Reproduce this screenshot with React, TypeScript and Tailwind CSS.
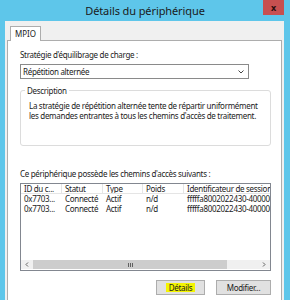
import React from 'react';

const cols = [
    { label: 'ID du c...', w: 'w-[41px]' },
    { label: 'Statut', w: 'w-[41px]' },
    { label: 'Type', w: 'w-[40px]' },
    { label: 'Poids', w: 'w-[41px]' },
    { label: 'Identificateur de session', w: 'w-[100px]' },
];

const rows = [
    ['0x7703...', 'Connecté', 'Actif', 'n/d', 'fffffa8002022430-4000000'],
    ['0x7703...', 'Connecté', 'Actif', 'n/d', 'fffffa8002022430-4000000'],
];

export default function App() {
    return (
        <div className="w-[290px] h-[300px] overflow-hidden bg-[#5ec6ea] text-[#1b1b1b] font-['Noto_Sans',sans-serif]">
            {/* Title bar */}
            <div className="relative h-[21px] flex items-center justify-center">
                <span className="text-[11px] leading-none text-[#1a1a1a] tracking-[-0.1px]">Détails du périphérique</span>
                <div className="absolute right-[6px] top-0 w-[21px] h-[15px] bg-[#c75050] flex items-center justify-center">
                    <span className="text-[9px] font-bold leading-none text-[#2a0e0e]">x</span>
                </div>
            </div>

            {/* Window body */}
            <div className="ml-[5px] mr-[6px] h-[279px] bg-[#f0f0f0] px-[2px] pt-[5px]">
                {/* Tabs */}
                <div className="flex pl-[3px] h-[14px]">
                    <div className="relative z-10 h-[15px] px-[4px] bg-white border border-b-0 border-[#adadad] text-[8px] leading-[13px]">
                        MPIO
                    </div>
                </div>
                {/* Panel */}
                <div className="h-[270px] bg-white border border-[#adadad] pl-[12px] pr-[10px] pt-[9px] text-[8px] leading-none tracking-[-0.3px]">
                    <div className="h-[10px] flex items-center">Stratégie d'équilibrage de charge :</div>
                    <div className="mt-[4px] w-[229px] h-[15px] border border-[#8a8a8a] flex items-center justify-between pl-[2px] pr-[4px]">
                        <span>Répétition alternée</span>
                        <svg width="6" height="4" viewBox="0 0 6 4">
                            <path d="M0.5 0.5 L3 3 L5.5 0.5" fill="none" stroke="#444" strokeWidth="1" />
                        </svg>
                    </div>

                    {/* Group box */}
                    <div className="relative mt-[11px] h-[56px] border border-[#dcdcdc] rounded-[3px] pt-[10px] pl-[8px]">
                        <span className="absolute -top-[5px] left-[4px] bg-white px-[2px] leading-[9px]">Description</span>
                        <div className="leading-[10px] whitespace-nowrap">
                            La stratégie de répétition alternée tente de répartir uniformément
                            <br />
                            les demandes entrantes à tous les chemins d'accès de traitement.
                        </div>
                    </div>

                    <div className="mt-[23px] h-[10px] flex items-center">Ce périphérique possède les chemins d'accès suivants :</div>

                    {/* List */}
                    <div className="mt-[4px] w-[251px] h-[88px] border border-[#828790] flex flex-col overflow-hidden">
                        <div className="flex h-[10px] shrink-0 border-b border-[#e5e5e5]">
                            {cols.map((c, i) => (
                                <div key={i} className={`${c.w} shrink-0 h-full flex items-center pl-[3px] border-r border-[#e5e5e5] whitespace-nowrap overflow-hidden`}>
                                    {c.label}
                                </div>
                            ))}
                        </div>
                        {rows.map((r, ri) => (
                            <div key={ri} className="flex h-[10px] shrink-0">
                                {r.map((v, ci) => (
                                    <div key={ci} className={`${cols[ci].w} shrink-0 h-full flex items-center pl-[3px] whitespace-nowrap overflow-hidden`}>
                                        {v}
                                    </div>
                                ))}
                            </div>
                        ))}
                        <div className="flex-1" />
                        {/* Horizontal scrollbar */}
                        <div className="h-[9px] shrink-0 flex bg-[#f0f0f0] mb-[1px]">
                            <div className="w-[12px] flex items-center justify-center">
                                <svg width="4" height="5" viewBox="0 0 4 5">
                                    <path d="M3 0.5 L1 2.5 L3 4.5" fill="none" stroke="#606060" strokeWidth="1" />
                                </svg>
                            </div>
                            <div className="w-[194px] bg-[#cdcdcd] flex items-center justify-center">
                                <div className="flex gap-[1px]">
                                    <div className="w-px h-[4px] bg-[#606060]" />
                                    <div className="w-px h-[4px] bg-[#606060]" />
                                    <div className="w-px h-[4px] bg-[#606060]" />
                                </div>
                            </div>
                            <div className="flex-1" />
                            <div className="w-[12px] flex items-center justify-center">
                                <svg width="4" height="5" viewBox="0 0 4 5">
                                    <path d="M1 0.5 L3 2.5 L1 4.5" fill="none" stroke="#606060" strokeWidth="1" />
                                </svg>
                            </div>
                        </div>
                    </div>

                    {/* Buttons */}
                    <div className="mt-[9px] w-[251px] flex justify-end gap-[11px]">
                        <button className="w-[49px] h-[15px] border border-[#adadad] bg-[#e1e1e1] flex items-center justify-center">
                            <span className="bg-[#f4f400] px-[3px] leading-[9px]">Détails</span>
                        </button>
                        <button className="w-[55px] h-[15px] border border-[#adadad] bg-[#e1e1e1] flex items-center justify-center">
                            Modifier...
                        </button>
                    </div>
                </div>
            </div>
        </div>
    );
}
